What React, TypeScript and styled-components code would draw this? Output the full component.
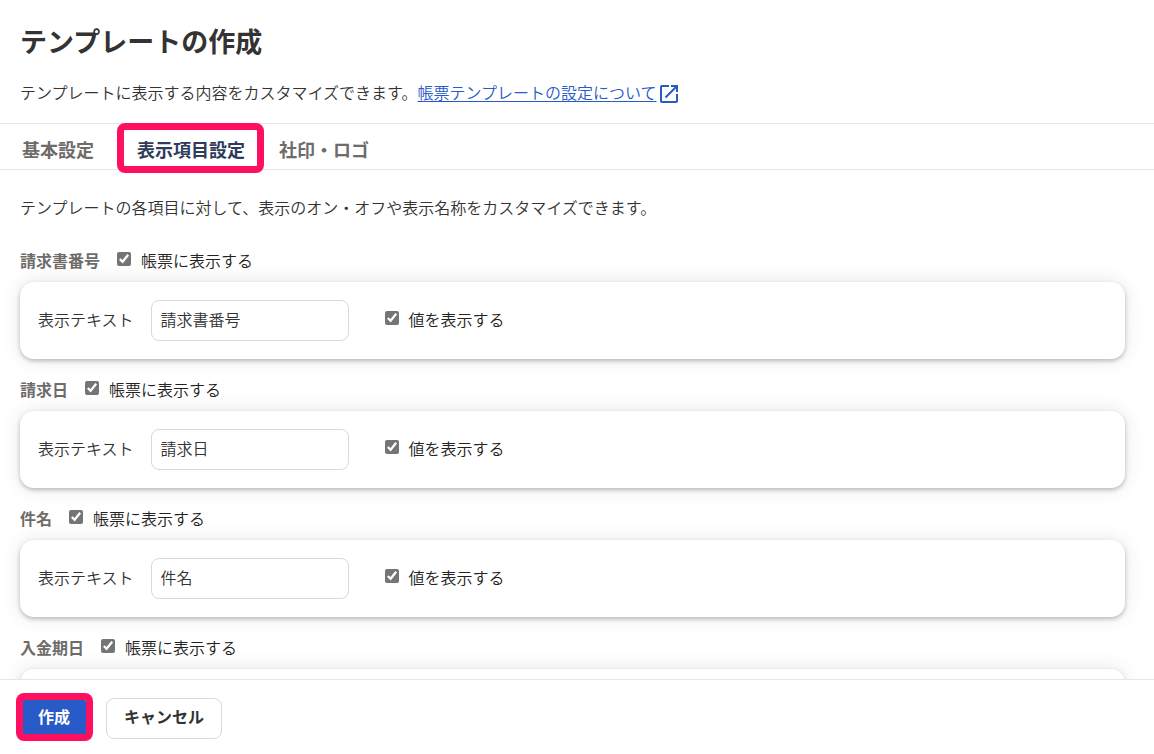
import React, { useState } from 'react';
import styled, { createGlobalStyle, css } from 'styled-components';

const GlobalStyle = createGlobalStyle`
  *, *::before, *::after { box-sizing: border-box; }
  body {
    margin: 0;
    background: #fff;
    color: #333;
    font-family: 'Noto Sans CJK JP', 'Noto Sans', sans-serif;
    font-size: 16px;
    font-weight: 350;
    line-height: 24px;
  }
  button, input { font: inherit; color: inherit; }
`;

const Page = styled.div`
  display: flex;
  flex-direction: column;
  height: 100vh;
  overflow: hidden;
`;

const Header = styled.header`
  padding: 21px 20px 19px;
`;

const Title = styled.h1`
  margin: 0 0 19px;
  font-size: 27px;
  line-height: 40px;
  font-weight: 700;
`;

const Text = styled.p`
  margin: 0;
`;

const Lead = styled(Text)`
  display: flex;
  align-items: center;
  height: 24px;
`;

const HelpLink = styled.a`
  color: #285ac8;
  text-decoration: underline;
  text-underline-offset: 2px;
`;

const ExternalIcon = styled.svg`
  flex: none;
  width: 24px;
  height: 24px;
  margin-top: 4px;
  fill: #285ac8;
`;

const Tabs = styled.nav`
  display: flex;
  flex: none;
  gap: 34px;
  height: 47px;
  padding: 0 22px;
  border-top: 1px solid #e6e6e6;
  border-bottom: 1px solid #e6e6e6;
`;

const marker = css`
  content: '';
  position: absolute;
  border: 7px solid #ff0f5f;
  border-radius: 8px;
  pointer-events: none;
`;

const Tab = styled.button<{ $active?: boolean }>`
  position: relative;
  padding: 4px 0 0;
  border: 0;
  background: none;
  font-size: 18px;
  font-weight: 700;
  color: #6e6b69;
  cursor: pointer;

  ${({ $active }) =>
    $active &&
    css`
      margin-left: 9px;
      color: #2d3c5a;
      &::after {
        ${marker}
        inset: -1px -19px -4px -20px;
      }
    `}
`;

const Content = styled.main`
  flex: 1;
  min-height: 0;
  overflow-y: auto;
  scrollbar-width: none;
  padding: 25px 29px 18px 20px;
`;

const Fields = styled.div`
  display: flex;
  flex-direction: column;
  gap: 18px;
  margin-top: 29px;
`;

const Field = styled.section`
  display: flex;
  flex-direction: column;
  gap: 10px;
`;

const FieldHead = styled.div`
  display: flex;
  align-items: center;
  gap: 17px;
`;

const FieldName = styled.h2`
  margin: 0;
  font-size: 16px;
  line-height: 24px;
  font-weight: 700;
  color: #6e6b69;
`;

const CheckLabel = styled.label`
  display: flex;
  align-items: center;
  gap: 10px;
  color: #222;
`;

const Checkbox = styled.input`
  width: 14px;
  height: 14px;
  margin: 0 0 2px;
  accent-color: #757575;
`;

const Card = styled.div`
  display: flex;
  align-items: center;
  gap: 36px;
  height: 77px;
  padding: 0 18px;
  border-radius: 14px;
  background: #fff;
  box-shadow: 0 2px 4px rgba(0, 0, 0, 0.24), 0 0 20px rgba(0, 0, 0, 0.1);

  ${CheckLabel} {
    padding-bottom: 4px;
  }
`;

const InputLabel = styled.label`
  display: flex;
  align-items: center;
  gap: 17px;
`;

const LabelText = styled.span`
  padding-bottom: 4px;
`;

const TextInput = styled.input`
  width: 198px;
  height: 41px;
  padding: 0 9px 4px;
  border: 1px solid #d9d9d9;
  border-radius: 8px;
  background: #fff;
`;

const Footer = styled.footer`
  display: flex;
  flex: none;
  align-items: center;
  gap: 20px;
  height: 75px;
  padding: 2px 22px 0;
  border-top: 1px solid #e6e6e6;
  background: #fff;
`;

const Button = styled.button<{ $primary?: boolean }>`
  position: relative;
  height: 41px;
  padding: 0 17px 4px;
  border: 1px solid #d9d9d9;
  border-radius: 8px;
  background: #fff;
  font-weight: 700;
  line-height: 24px;
  cursor: pointer;

  ${({ $primary }) =>
    $primary &&
    css`
      padding: 0 15px 4px;
      border-color: #285ac8;
      border-radius: 4px;
      background: #285ac8;
      color: #fff;
      &::after {
        ${marker}
        inset: -6px -8px -3px -7px;
      }
    `}
`;

const tabs = ['基本設定', '表示項目設定', '社印・ロゴ'];
const fieldNames = ['請求書番号', '請求日', '件名', '入金期日'];

function FieldSetting({ name }: { name: string }) {
  const [text, setText] = useState(name);
  return (
    <Field>
      <FieldHead>
        <FieldName>{name}</FieldName>
        <CheckLabel>
          <Checkbox type="checkbox" defaultChecked />
          帳票に表示する
        </CheckLabel>
      </FieldHead>
      <Card>
        <InputLabel>
          <LabelText>表示テキスト</LabelText>
          <TextInput type="text" value={text} onChange={(e) => setText(e.target.value)} />
        </InputLabel>
        <CheckLabel>
          <Checkbox type="checkbox" defaultChecked />
          値を表示する
        </CheckLabel>
      </Card>
    </Field>
  );
}

export default function App() {
  const [active, setActive] = useState(1);
  return (
    <>
      <GlobalStyle />
      <Page>
        <Header>
          <Title>テンプレートの作成</Title>
          <Lead>
            テンプレートに表示する内容をカスタマイズできます。
            <HelpLink href="#help">帳票テンプレートの設定について</HelpLink>
            <ExternalIcon viewBox="0 0 24 24" aria-hidden="true">
              <path d="M19 19H5V5h7V3H5a2 2 0 0 0-2 2v14a2 2 0 0 0 2 2h14c1.1 0 2-.9 2-2v-7h-2v7zM14 3v2h3.59l-9.83 9.83 1.41 1.41L19 6.41V10h2V3h-7z" />
            </ExternalIcon>
          </Lead>
        </Header>
        <Tabs>
          {tabs.map((tab, i) => (
            <Tab key={tab} type="button" $active={i === active} onClick={() => setActive(i)}>
              {tab}
            </Tab>
          ))}
        </Tabs>
        <Content>
          <Text>テンプレートの各項目に対して、表示のオン・オフや表示名称をカスタマイズできます。</Text>
          <Fields>
            {fieldNames.map((name) => (
              <FieldSetting key={name} name={name} />
            ))}
          </Fields>
        </Content>
        <Footer>
          <Button type="button" $primary>
            作成
          </Button>
          <Button type="button">キャンセル</Button>
        </Footer>
      </Page>
    </>
  );
}
